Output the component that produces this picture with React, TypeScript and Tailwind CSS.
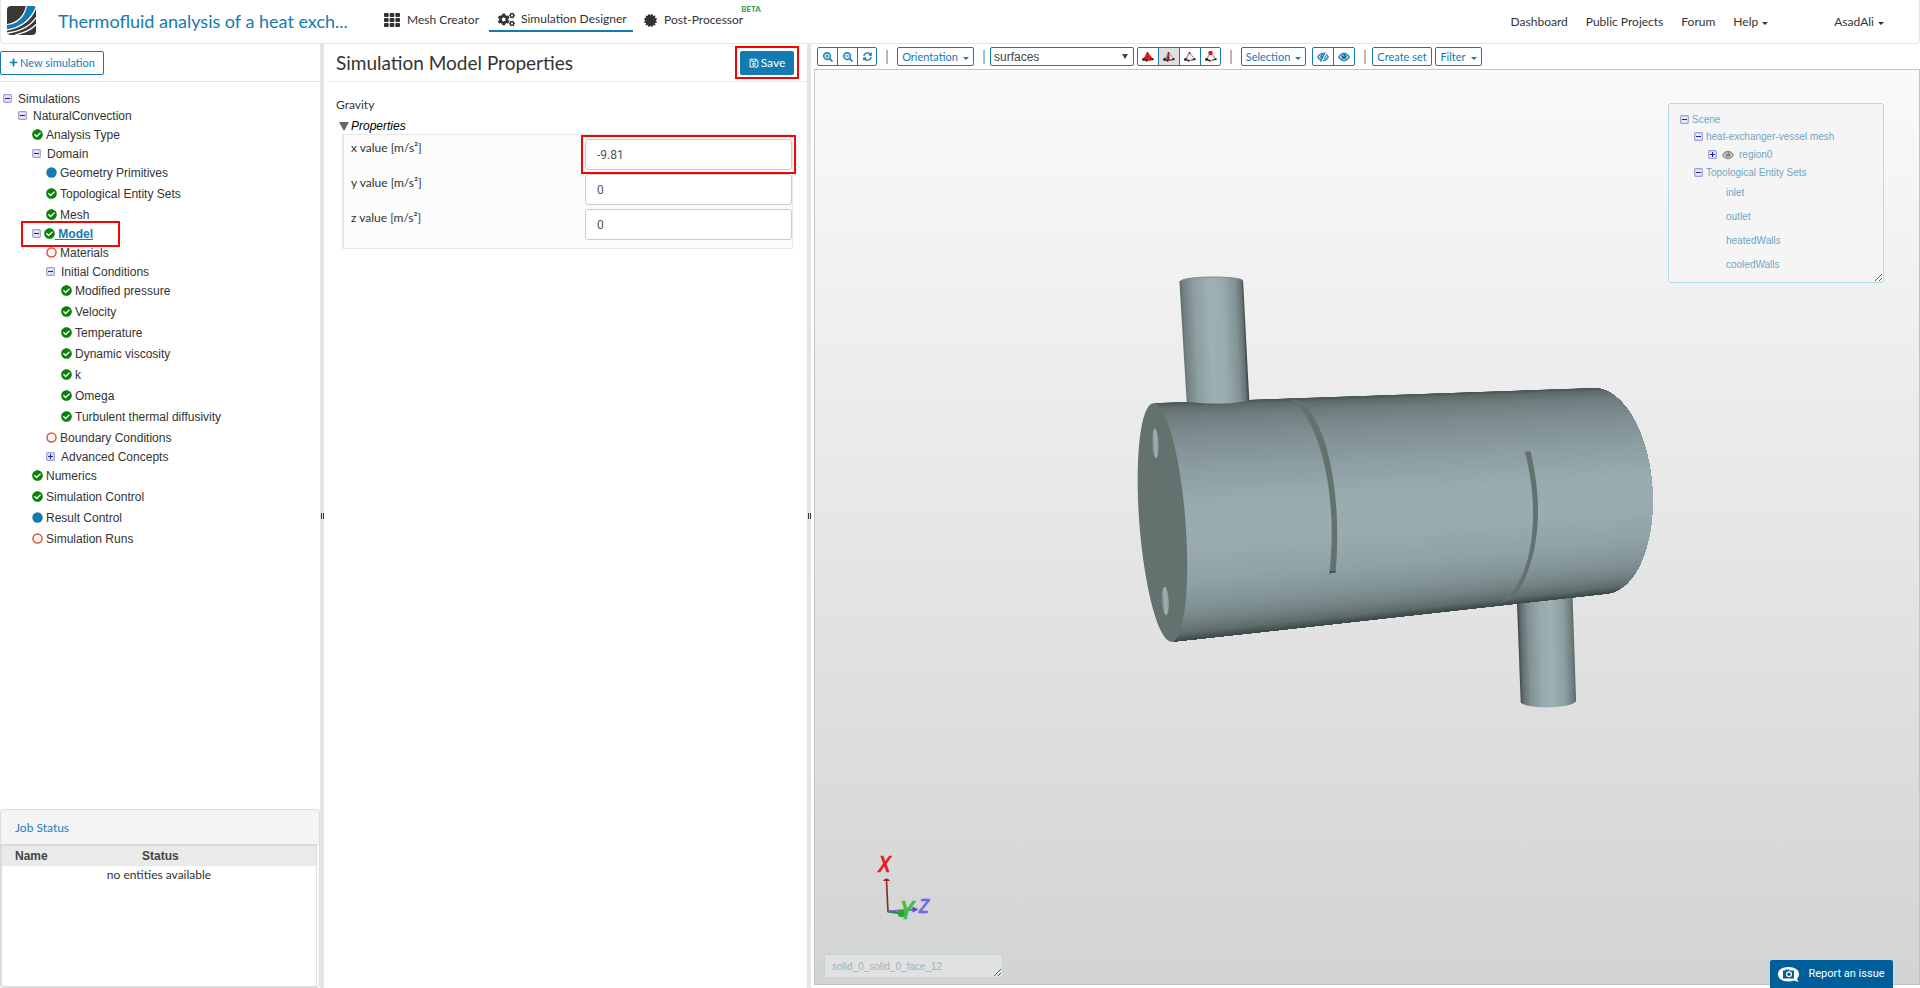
import React from "react";
import {
  FaCertificate,
  FaCheckCircle,
  FaCogs,
  FaPlus,
  FaRegSave,
  FaSearchMinus,
  FaSearchPlus,
  FaSyncAlt,
  FaTh,
} from "react-icons/fa";

type Status = "done" | "optional" | "open";
type Row = { label: string; depth: number; toggle?: "plus" | "minus"; status?: Status; active?: boolean };

const rows: Row[] = [
  { label: "Simulations", depth: 0, toggle: "minus" },
  { label: "NaturalConvection", depth: 1, toggle: "minus" },
  { label: "Analysis Type", depth: 2, status: "done" },
  { label: "Domain", depth: 2, toggle: "minus" },
  { label: "Geometry Primitives", depth: 3, status: "optional" },
  { label: "Topological Entity Sets", depth: 3, status: "done" },
  { label: "Mesh", depth: 3, status: "done" },
  { label: "Model", depth: 2, toggle: "minus", status: "done", active: true },
  { label: "Materials", depth: 3, status: "open" },
  { label: "Initial Conditions", depth: 3, toggle: "minus" },
  { label: "Modified pressure", depth: 4, status: "done" },
  { label: "Velocity", depth: 4, status: "done" },
  { label: "Temperature", depth: 4, status: "done" },
  { label: "Dynamic viscosity", depth: 4, status: "done" },
  { label: "k", depth: 4, status: "done" },
  { label: "Omega", depth: 4, status: "done" },
  { label: "Turbulent thermal diffusivity", depth: 4, status: "done" },
  { label: "Boundary Conditions", depth: 3, status: "open" },
  { label: "Advanced Concepts", depth: 3, toggle: "plus" },
  { label: "Numerics", depth: 2, status: "done" },
  { label: "Simulation Control", depth: 2, status: "done" },
  { label: "Result Control", depth: 2, status: "optional" },
  { label: "Simulation Runs", depth: 2, status: "open" },
];

const leafIndent = ["pl-[3px]", "pl-[18px]", "pl-8", "pl-[46px]", "pl-[61px]"];

function Caret() {
  return (
    <svg viewBox="0 0 6 3" className="mt-1 h-[3px] w-[6px] shrink-0" fill="currentColor" aria-hidden="true">
      <path d="M0 0h6L3 3z" />
    </svg>
  );
}

function Toggle({ kind }: { kind: "plus" | "minus" }) {
  return (
    <svg viewBox="0 0 9 9" className="size-[9px] shrink-0" aria-hidden="true">
      <rect x=".7" y=".7" width="7.600" height="7.600" rx="1" fill="#e9e9f7" stroke="#9a9fd0" strokeWidth="1.2" />
      <path d={kind === "plus" ? "M2 4.5h5M4.5 2v5" : "M2 4.5h5"} stroke="#1f1fb8" strokeWidth="1.1" />
    </svg>
  );
}

function StatusIcon({ status }: { status: Status }) {
  if (status === "done") return <FaCheckCircle className="size-[11px] shrink-0 text-[#0a820a]" aria-hidden="true" />;
  return (
    <svg viewBox="0 0 11 11" className="size-[11px] shrink-0" aria-hidden="true">
      {status === "optional" ? (
        <circle cx="5.5" cy="5.5" r="5.2" fill="#147bb0" />
      ) : (
        <circle cx="5.5" cy="5.5" r="4.500" fill="none" stroke="#dd5a35" strokeWidth="1.500" />
      )}
    </svg>
  );
}

function TreeRow({ row }: { row: Row }) {
  if (row.active) {
    return (
      <li className={"flex h-[17px] items-center " + leafIndent[row.depth]}>
        <button
          type="button"
          aria-current="true"
          className="-ml-[11px] flex h-[26px] w-[99px] shrink-0 items-center border-2 border-[#fa0000] pl-[9px] text-left font-bold text-[#147bb0]"
        >
          <Toggle kind="minus" />
          <span className="ml-[3px] flex"><StatusIcon status="done" /></span>
          <span className="whitespace-pre underline"> {row.label}</span>
        </button>
      </li>
    );
  }
  return (
    <li className={(row.toggle ? "h-[17px] " : "h-[21px] ") + "flex items-center " + leafIndent[row.depth]}>
      <button type="button" className={"flex items-center text-left " + (row.toggle ? "gap-[6px]" : "gap-[3px]")}>
        {row.toggle && <Toggle kind={row.toggle} />}
        {row.status && <StatusIcon status={row.status} />}
        <span>{row.label}</span>
      </button>
    </li>
  );
}

function Logo() {
  return (
    <svg viewBox="0 0 29 29" className="size-[29px]" role="img" aria-label="Home">
      <clipPath id="logo-clip">
        <rect width="29" height="29" rx="4" />
      </clipPath>
      <g clipPath="url(#logo-clip)">
        <rect width="29" height="29" fill="#3d3835" />
        <path d="M0 19C11 17 17 11 20 0h9v2C25 13 15 21 0 24z" fill="#0f7ab4" />
        <path d="M0 18.500C11 17 17 11 19.500 0" fill="none" stroke="#fff" strokeWidth="1.200" />
        <path d="M0 24C14 21.500 24 14 29 1.500" fill="none" stroke="#fff" strokeWidth="1.300" />
        <path d="M0 27C14 25 24 19 29 11.500" fill="none" stroke="#fff" strokeWidth="1.300" />
        <path d="M8 29C17 27 25 23 29 18.500" fill="none" stroke="#fff" strokeWidth="1.200" />
      </g>
    </svg>
  );
}

function Eye({ hidden }: { hidden?: boolean }) {
  return (
    <svg viewBox="0 0 12 10" className="h-[10px] w-3" aria-hidden="true">
      <path d="M.6 5C2.500 2 4.200 1.300 6 1.300S9.500 2 11.400 5C9.500 8 7.800 8.700 6 8.700S2.500 8 .6 5z" fill="currentColor" fillOpacity=".25" stroke="currentColor" strokeWidth="1.100" />
      <circle cx="6" cy="4.600" r="2.700" fill="currentColor" />
      <path d="M4.700 4.300A1.400 1.400 0 0 1 6 3" stroke="#fff" strokeWidth=".6" fill="none" />
      {hidden && (
        <>
          <path d="M9.200 0L4.600 10" stroke="#fff" strokeWidth="1.300" />
          <path d="M8.300 0L3.600 9.800" stroke="currentColor" strokeWidth="1" />
        </>
      )}
    </svg>
  );
}

function Tetra({ mode }: { mode: "volume" | "face" | "edge" | "node" }) {
  return (
    <svg viewBox="0 0 12 11" className="h-[11px] w-3" aria-hidden="true">
      <path d="M5.500 1.500L1.500 8.500l4.200 1 5-1.300z" fill={mode === "volume" ? "#f01010" : "#f4f4f4"} stroke={mode === "volume" ? "#d01515" : "#777"} strokeWidth=".9" />
      {mode === "face" && <path d="M5.500 1.500L3 8.500l3.500 1z" fill="#f01010" />}
      {mode === "edge" && <path d="M5.500 1.500L2 8.300" stroke="#f07070" strokeWidth="1" />}
      {mode === "face" && <path d="M5.500 1.500L6.500 9.300" stroke="#333" strokeWidth=".8" />}
      <path d="M1.500 8.500l3 1M7.500 9.300l3-1" stroke="#222" strokeWidth="1" fill="none" />
      <circle cx="5.500" cy="2" r={mode === "node" ? 2.2 : 0.9} fill={mode === "node" ? "#f01010" : "#333"} />
      <circle cx="1.500" cy="8.500" r="1.400" fill="#222" />
      <circle cx="10.600" cy="8.200" r="1.100" fill="#222" />
      <circle cx="4.600" cy="9.700" r="1" fill="#222" />
    </svg>
  );
}

const shades: [number, number[]][] = [
  [0, [72, 84, 84]],
  [0.02, [94, 108, 108]],
  [0.06, [112, 124, 126]],
  [0.13, [124, 138, 142]],
  [0.28, [139, 157, 160]],
  [0.45, [153, 172, 175]],
  [0.6, [154, 172, 175]],
  [0.76, [143, 162, 166]],
  [0.86, [130, 147, 152]],
  [0.92, [116, 131, 130]],
  [0.97, [95, 108, 108]],
  [1, [62, 74, 74]],
];

function shadeAt(v: number) {
  const i = Math.max(1, shades.findIndex(([s]) => s >= v));
  const [s0, c0] = shades[i - 1];
  const [s1, c1] = shades[i];
  const k = (v - s0) / (s1 - s0);
  return "rgb(" + c0.map((c, n) => Math.round(c + (c1[n] - c) * k)).join(",") + ")";
}

function rim(cx: number, cy: number, ax: number, ay: number, bx: number, by: number, t: number) {
  return (cx - ax * Math.cos(t) + bx * Math.sin(t)).toFixed(1) + " " + (cy - ay * Math.cos(t) + by * Math.sin(t)).toFixed(1);
}

const near = (t: number) => rim(122.5, 790.5, 27.5, 357.5, 66, -8, t);
const far = (t: number) => rim(1392.5, 695.5, 22.5, 307.5, 153, -15, t);
const facetCount = 120;
const angles = Array.from({ length: facetCount + 1 }, (_, i) => (i / facetCount) * Math.PI);

// Each facet reaches from its own angle down to the lower edge; the next one is painted over it.
const facets = angles.slice(0, -1).map((t, i) => {
  const rest = angles.slice(i);
  return {
    d: "M" + rest.map(near).join("L") + "L" + rest.map(far).reverse().join("L") + "z",
    color: shadeAt((1 - Math.cos(t + Math.PI / facetCount / 2)) / 2),
  };
});

function Scene() {
  return (
    <svg viewBox="815 70 1104 915" className="absolute inset-0 size-full" role="img" aria-label="Heat exchanger model">
      <defs>
        <linearGradient id="tube-top" x1="180" y1="250" x2="368" y2="242" gradientUnits="userSpaceOnUse">
          <stop offset="0" stopColor="#5f6d6d" />
          <stop offset=".06" stopColor="#738282" />
          <stop offset=".22" stopColor="#8d9fa2" />
          <stop offset=".45" stopColor="#9eb0b4" />
          <stop offset=".65" stopColor="#9aacb0" />
          <stop offset=".85" stopColor="#829396" />
          <stop offset=".95" stopColor="#647272" />
          <stop offset="1" stopColor="#2c3636" />
        </linearGradient>
        <linearGradient id="tube-bottom" x1="1157" y1="1170" x2="1320" y2="1165" gradientUnits="userSpaceOnUse">
          <stop offset="0" stopColor="#394444" />
          <stop offset=".06" stopColor="#5f6d6d" />
          <stop offset=".2" stopColor="#829396" />
          <stop offset=".42" stopColor="#99abaf" />
          <stop offset=".6" stopColor="#9eb0b4" />
          <stop offset=".82" stopColor="#8b9da0" />
          <stop offset=".95" stopColor="#6f7e7e" />
          <stop offset="1" stopColor="#5a6868" />
        </linearGradient>
        <linearGradient id="hole">
          <stop offset="0" stopColor="#7b8a8b" />
          <stop offset=".5" stopColor="#9fb1b4" />
          <stop offset="1" stopColor="#8b9c9e" />
        </linearGradient>
      </defs>
      <g transform="translate(1120 259) scale(.3444 .3340)">
        <path d="M1152 1000L1164 1330C1180 1350 1308 1350 1325 1326L1314 990z" fill="url(#tube-bottom)" />
        {facets.map((f, i) => (
          <path key={i} d={f.d} fill={f.color} />
        ))}
        <path d="M172 70C175 50 350 50 357 66L375 426C350 428 330 434 285 434C245 434 215 430 193 429z" fill="url(#tube-top)" />
        <path d="M172 70C175 50 350 50 357 66" fill="none" stroke="#718080" strokeWidth="2.500" />
        <ellipse cx="0" cy="0" rx="67" ry="358.500" transform="translate(122.500 790.500) rotate(-4.300)" fill="#64726f" />
        <ellipse cx="102" cy="553" rx="9" ry="44" transform="rotate(-2 102 553)" fill="url(#hole)" />
        <ellipse cx="131" cy="1026" rx="10" ry="42" transform="rotate(-3 131 1026)" fill="url(#hole)" />
        <path d="M500 421C575 490 620 660 614 860L609 938L626 940C641 760 622 530 530 428z" fill="#64726f" />
        <path d="M608 936h18v4l-14 1-3 6z" fill="#414d4d" />
        <path d="M1176 579L1192 577C1226 715 1228 890 1148 1010L1100 1037C1168 990 1200 890 1200 760C1199 690 1190 630 1176 579z" fill="#64726f" />
      </g>
      <g fontFamily="'Open Sans', sans-serif" fontWeight="700" fontStyle="italic">
        <path d="M887.500 913L886 882" stroke="#8d2424" strokeWidth="1.600" />
        <path d="M882.500 882q3.500-5 7 0z" fill="#a81818" />
        <path d="M887.500 912.500l26-2" stroke="#7070b8" strokeWidth="2" />
        <path d="M912 907.500l6 3-6 3z" fill="#5050c8" />
        <path d="M887 912.500l14 2" stroke="#3c7c4c" strokeWidth="2" />
        <circle cx="901" cy="914.500" r="3.800" fill="#2fa03a" />
        <text x="878" y="872.500" fontSize="21" fontWeight="600" fill="#e51c1c" stroke="#e51c1c" strokeWidth=".4">X</text>
        <text x="918" y="913.500" fontSize="20" fontWeight="600" fill="#6a6af0" stroke="#6a6af0" strokeWidth=".3">Z</text>
        <text x="899" y="920" fontSize="26" fontWeight="600" fill="#3fbf43" stroke="#3fbf43" strokeWidth=".4">Y</text>
      </g>
    </svg>
  );
}

function Divider() {
  return <span className="mx-[9px] h-[14px] w-[2px] shrink-0 border-l border-[#c9b5a8] bg-[#9bbbe0]" />;
}

const toolButton =
  "flex h-[19px] shrink-0 items-center justify-center gap-[5px] whitespace-nowrap rounded-[2px] border border-[#147bb0] bg-white text-[11px] leading-none text-[#147bb0]";
const toolGroup = "flex h-[19px] shrink-0 divide-x divide-[#147bb0] rounded-[2px] border border-[#147bb0] text-[#147bb0]";
const groupButton = "flex items-center justify-center";

function Toolbar() {
  return (
    <div className="flex h-[25px] shrink-0 items-center pl-[6px]">
      <div className={toolGroup}>
        <button type="button" aria-label="Zoom in" className={groupButton + " w-5"}><FaSearchPlus className="size-[10px]" /></button>
        <button type="button" aria-label="Zoom out" className={groupButton + " w-5"}><FaSearchMinus className="size-[10px]" /></button>
        <button type="button" aria-label="Reset view" className={groupButton + " w-[18px]"}><FaSyncAlt className="size-[9px]" /></button>
      </div>
      <Divider />
      <button type="button" className={toolButton + " w-[77px]"}>Orientation <Caret /></button>
      <Divider />
      <div className="relative ml-[-4px] flex w-36 shrink-0">
        <select
          aria-label="Render mode"
          className="h-[19px] w-full appearance-none rounded-[2px] border border-[#147bb0] bg-white pl-[3px] font-['Liberation_Sans',sans-serif] text-[12px] leading-none text-[#444]"
        >
          <option>surfaces</option>
        </select>
        <svg viewBox="0 0 6 5" className="pointer-events-none absolute top-[7px] right-[6px] h-[5px] w-[6px]" aria-hidden="true">
          <path d="M0 0h6L3 5z" fill="#444" />
        </svg>
      </div>
      <div className={toolGroup + " ml-[3px]"}>
        <button type="button" aria-label="Pick volumes" className={groupButton + " w-[21px]"}><Tetra mode="volume" /></button>
        <button type="button" aria-label="Pick faces" className={groupButton + " w-[21px] bg-[#e0e0e0]"}><Tetra mode="face" /></button>
        <button type="button" aria-label="Pick edges" className={groupButton + " w-[21px]"}><Tetra mode="edge" /></button>
        <button type="button" aria-label="Pick nodes" className={groupButton + " w-[19px]"}><Tetra mode="node" /></button>
      </div>
      <Divider />
      <button type="button" className={toolButton + " w-[65px]"}>Selection <Caret /></button>
      <div className={toolGroup + " ml-[6px]"}>
        <button type="button" aria-label="Hide selection" className={groupButton + " w-[21px]"}><Eye hidden /></button>
        <button type="button" aria-label="Show all" className={groupButton + " w-5"}><Eye /></button>
      </div>
      <Divider />
      <button type="button" className={toolButton + " ml-[-3px] w-[60px]"}>Create set</button>
      <button type="button" className={toolButton + " ml-[3px] w-[47px]"}>Filter <Caret /></button>
    </div>
  );
}

function SceneTree() {
  return (
    <div className="absolute top-[33px] right-[35px] h-[180px] w-[216px] resize overflow-hidden rounded-[3px] border border-[#b5dcea] bg-[#f5f5f5] pt-[7px] pl-[11px] font-['Liberation_Sans',sans-serif] text-[10px] leading-none text-[#71a6c2]">
      <ul>
        <li className="flex h-[17px] items-center gap-[3px]"><Toggle kind="minus" />Scene</li>
        <li className="flex h-[17px] items-center gap-[3px] pl-[14px]"><Toggle kind="minus" />heat-exchanger-vessel mesh</li>
        <li className="flex h-[19px] items-center gap-[5px] pl-7">
          <Toggle kind="plus" />
          <span className="text-[#8a8a84]"><Eye /></span>
          region0
        </li>
        <li className="flex h-[17px] items-center gap-[3px] pl-[14px]"><Toggle kind="minus" />Topological Entity Sets</li>
        {["inlet", "outlet", "heatedWalls", "cooledWalls"].map((name) => (
          <li key={name} className="flex h-6 items-center pl-[46px]">{name}</li>
        ))}
      </ul>
    </div>
  );
}

function Splitter() {
  return (
    <div className="flex w-1 shrink-0 flex-col items-center justify-center bg-[#e5e5e5]">
      <span className="flex h-[6px] w-[3px] border-x border-[#333]" />
    </div>
  );
}

const fields = [
  { id: "gravity-x", axis: "x", value: "-9.81", marked: true },
  { id: "gravity-y", axis: "y", value: "0", marked: false },
  { id: "gravity-z", axis: "z", value: "0", marked: false },
];

export default function App() {
  return (
    <div className="flex h-screen flex-col overflow-hidden bg-white font-[Lato,sans-serif] text-[13px] leading-4 text-[#333]">
      <header className="flex h-11 shrink-0 items-center rounded-b-[4px] border border-t-0 border-[#e5e5e5] pr-[35px] pl-[6px]">
        <a href="#home" className="mb-[3px]"><Logo /></a>
        <h1 className="mb-[2px] ml-[22px] w-[320px] text-[18px] leading-5 whitespace-nowrap text-[#147bb0]">Thermofluid analysis of a heat exch...</h1>
        <nav className="flex h-full items-start text-[12px]">
          <a href="#mesh" className="mt-2 flex h-6 items-center gap-[7px] px-[6px]">
            <FaTh className="size-4" />Mesh Creator
          </a>
          <a href="#designer" className="mt-2 ml-1 flex h-6 w-36 items-center gap-[6px] border-b-2 border-[#147bb0] pl-[9px]">
            <FaCogs className="size-[17px]" />Simulation Designer
          </a>
          <a href="#post" className="relative mt-2 ml-[11px] flex h-6 items-center gap-[7px]">
            <FaCertificate className="size-[13px]" />Post-Processor
            <span className="absolute -top-[7px] left-full -ml-[2px] text-[8px] font-bold text-[#2d9a3c]">BETA</span>
          </a>
        </nav>
        <nav className="ml-auto flex items-center gap-[18px] text-[12px]">
          <a href="#dashboard">Dashboard</a>
          <a href="#projects">Public Projects</a>
          <a href="#forum">Forum</a>
          <button type="button" className="flex items-center gap-1">Help <Caret /></button>
          <button type="button" className="ml-[48px] flex items-center gap-1">AsadAli <Caret /></button>
        </nav>
      </header>

      <div className="flex min-h-0 flex-1">
        <aside className="flex w-80 shrink-0 flex-col">
          <div className="mr-px flex h-[38px] shrink-0 items-center border-b border-[#e5e5e5]">
            <button type="button" className="flex h-6 w-[104px] items-center justify-center gap-[2px] rounded-[2px] border border-[#147bb0] text-[11px] text-[#147bb0]">
              <FaPlus className="size-[9px]" />New simulation
            </button>
          </div>
          <ul className="mt-2 flex-1 font-['Liberation_Sans',sans-serif] text-[12px] leading-4">
            {rows.map((row) => <TreeRow key={row.label} row={row} />)}
          </ul>
          <section className="flex h-[179px] shrink-0 flex-col rounded-[3px] border border-[#dcdcdc]">
            <h2 className="flex h-[35px] shrink-0 items-center border-b border-[#dcdcdc] bg-[#f4f4f4] pt-[2px] pl-[14px] text-[12px] text-[#2381b5]">Job Status</h2>
            <div className="mr-[2px] flex-1 border border-[#dcdcdc]">
              <table className="w-full table-fixed text-[12px]">
                <thead className="bg-[#eaeaea] font-['Liberation_Sans',sans-serif] text-[#444]">
                  <tr className="h-5">
                    <th className="w-[127px] pl-[13px] text-left">Name</th>
                    <th className="pl-[13px] text-left">Status</th>
                  </tr>
                </thead>
                <tbody>
                  <tr className="h-[18px]"><td colSpan={2} className="text-center">no entities available</td></tr>
                </tbody>
              </table>
            </div>
          </section>
        </aside>

        <Splitter />

        <main className="w-[483px] shrink-0 pl-[3px]">
          <div className="flex h-[38px] items-center justify-between border-b border-[#ebebeb] pr-2 pl-[9px]">
            <h2 className="text-[19px] leading-6">Simulation Model Properties</h2>
            <span className="border-2 border-[#fa0000] px-[3px] pt-[3px] pb-[2px]">
              <button type="button" className="flex h-6 w-[54px] items-center justify-center gap-[2px] rounded-[2px] bg-[#147bb0] text-[12px] text-white">
                <FaRegSave className="size-[10px]" />Save
              </button>
            </span>
          </div>
          <form className="pr-[14px] pl-[9px]" onSubmit={(e) => e.preventDefault()}>
            <p className="mt-[15px] text-[12px]">Gravity</p>
            <button type="button" className="mt-[5px] ml-[3px] flex items-center gap-[2px] font-['Liberation_Sans',sans-serif] text-[12px] text-black italic">
              <svg viewBox="0 0 10 9" className="h-[9px] w-[10px]" aria-hidden="true"><path d="M0 0h10L5 9z" fill="#666" /></svg>
              Properties
            </button>
            <div className="ml-[6px] flex flex-col gap-1 border border-l-2 border-[#e8e8e8] bg-[#fcfcfc] pt-1 pb-2 pl-[7px]">
              {fields.map((f) => (
                <div key={f.id} className="flex items-start justify-between">
                  <label htmlFor={f.id} className="pt-px text-[12px]">{f.axis} value [m/s²]</label>
                  <span className={"-m-1 border-2 p-[2px] " + (f.marked ? "relative border-[#fa0000]" : "border-transparent")}>
                    <input
                      id={f.id}
                      type="text"
                      defaultValue={f.value}
                      className="block h-[31px] w-[207px] rounded-[3px] border border-[#ccc] bg-white px-[11px] font-[Roboto,sans-serif] text-[12px] text-[#555]"
                    />
                  </span>
                </div>
              ))}
            </div>
          </form>
        </main>

        <Splitter />

        <section className="flex min-w-0 flex-1 flex-col pb-[3px]">
          <Toolbar />
          <div className="relative ml-[3px] flex-1 border border-[#c4c4c4] bg-linear-to-b from-[#fafafa] to-[#d3d3d3]">
            <Scene />
            <SceneTree />
            <textarea
              aria-label="Selected entities"
              defaultValue="solid_0_solid_0_face_12"
              className="absolute bottom-[6px] left-[9px] h-6 w-[179px] overflow-hidden rounded-[2px] border border-[#c3d6de] bg-[#e1e1e1] px-[7px] pt-[6px] font-['Liberation_Sans',sans-serif] text-[10px] leading-3 text-[#9db3bf]"
            />
          </div>
        </section>
      </div>

      <button type="button" className="fixed right-[27px] bottom-0 flex h-7 w-[123px] items-center justify-center gap-[9px] rounded-t-[2px] bg-[#005f9b] font-[Roboto,sans-serif] text-[11px] text-white">
        <svg viewBox="0 0 21 15" className="h-[15px] w-[21px]" aria-hidden="true">
          <path d="M10.500 0C17 0 21 3 21 7c0 2-.8 3.600-2 4.700L20.500 15l-4.500-1.500c-1.600.6-3.500.9-5.500.9C4 14.400 0 11.500 0 7.200S4 0 10.500 0z" fill="#fff" />
          <path d="M5 3.500h2l1-1h3l.5 1H16v8H5z" fill="#005f9b" />
          <circle cx="11" cy="7.300" r="3" fill="#fff" />
          <circle cx="11" cy="7.300" r="1.700" fill="#005f9b" />
        </svg>
        Report an issue
      </button>
    </div>
  );
}
